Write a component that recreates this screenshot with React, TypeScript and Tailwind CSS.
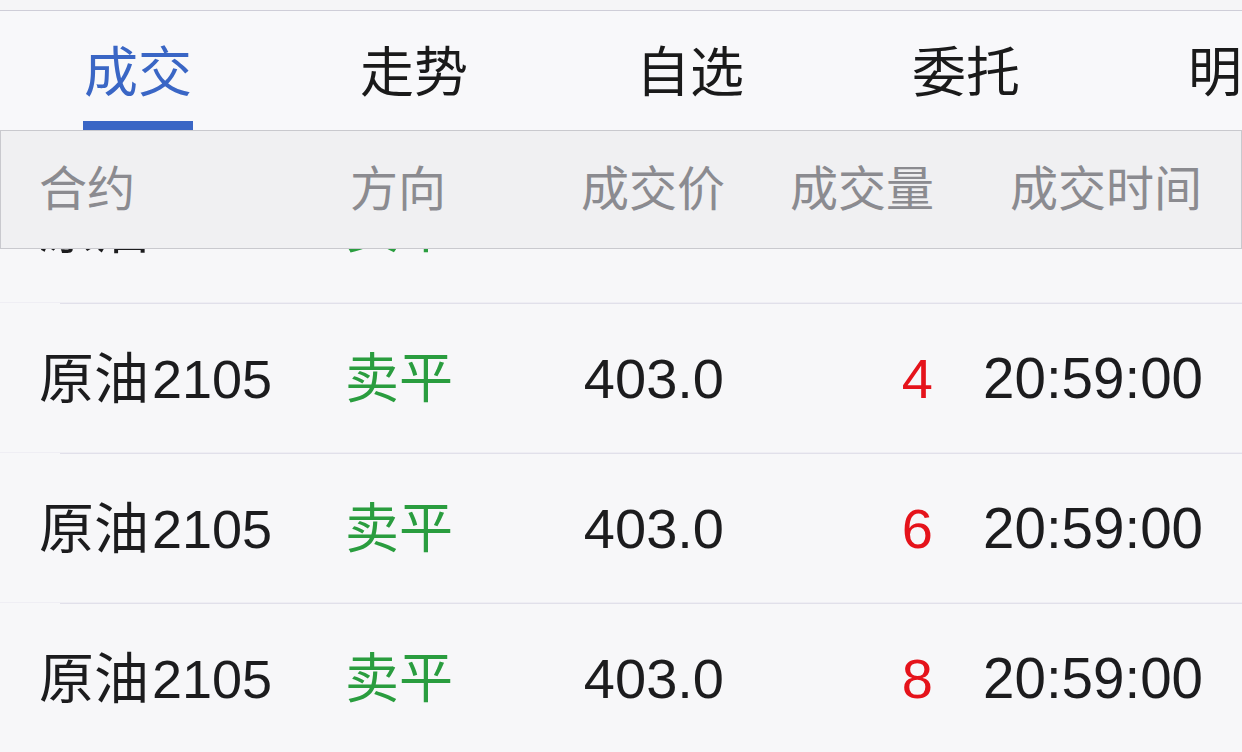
import React from "react";

const tabs = ["成交", "走势", "自选", "委托", "明细"];
const rows = ["2", "4", "6", "8"];

const font = {
  fontFamily: '"Liberation Sans", "Noto Sans CJK SC", sans-serif',
};

function Row({ qty }: { qty: string }) {
  return (
    <div className="relative h-[150px] flex items-center">
      <div className="w-[345px] pl-[39px] text-[55px] text-[#1c1c1e] whitespace-nowrap">
        原油<span className="ml-[3px] text-[54px]">2105</span>
      </div>
      <div className="w-[215px] text-[54px] text-[#2a9d3f] whitespace-nowrap">卖平</div>
      <div className="w-[164px] text-right text-[56px] text-[#1c1c1e] whitespace-nowrap">403.0</div>
      <div className="w-[209px] text-right text-[56px] text-[#e5131b] whitespace-nowrap">{qty}</div>
      <div className="w-[270px] text-right text-[56.5px] text-[#1c1c1e] whitespace-nowrap">20:59:00</div>
      <div className="absolute left-0 right-0 bottom-0 flex flex-col">
        <div className="h-px bg-[#efeef4]" />
        <div className="h-px ml-[60px] bg-[#e1e0ea]" />
      </div>
    </div>
  );
}

export default function App() {
  return (
    <div
      className="w-[1242px] h-[752px] overflow-hidden bg-[#f7f7f9] flex flex-col"
      style={font}
    >
      <div className="h-[10px] shrink-0 bg-[#f5f5f7]" />
      <div className="h-px shrink-0 bg-[#cfced8]" />
      <div className="h-[119px] shrink-0 flex bg-[#f8f8fa] overflow-hidden">
        {tabs.map((t, i) => (
          <div
            key={t}
            className="w-[276px] shrink-0 flex flex-col items-center"
          >
            <div className="flex-1 flex flex-col items-center justify-center pt-[14px]">
              <span
                className={
                  "text-[54px] leading-none whitespace-nowrap " +
                  (i === 0 ? "text-[#3a66c5]" : "text-[#1a1a1a]")
                }
              >
                {t}
              </span>
            </div>
            <div
              className={
                "h-[9px] w-[110px] " + (i === 0 ? "bg-[#3a66c5]" : "bg-transparent")
              }
            />
          </div>
        ))}
      </div>
      <div className="relative flex-1 overflow-hidden">
        <div className="pt-[24px] flex flex-col">
          {rows.map((q, i) => (
            <Row key={i} qty={q} />
          ))}
        </div>
        <div className="absolute left-0 top-0 w-[1242px] h-[119px] bg-[#f0f0f2] border border-[#c9c9ce] flex items-center text-[48px] text-[#8b8b90] whitespace-nowrap">
          <div className="w-[345px] pl-[38px]">合约</div>
          <div className="w-[215px] pl-[4px]">方向</div>
          <div className="w-[164px] text-right">成交价</div>
          <div className="w-[209px] text-right">成交量</div>
          <div className="w-[270px] text-right pr-[2px]">成交时间</div>
        </div>
      </div>
    </div>
  );
}
